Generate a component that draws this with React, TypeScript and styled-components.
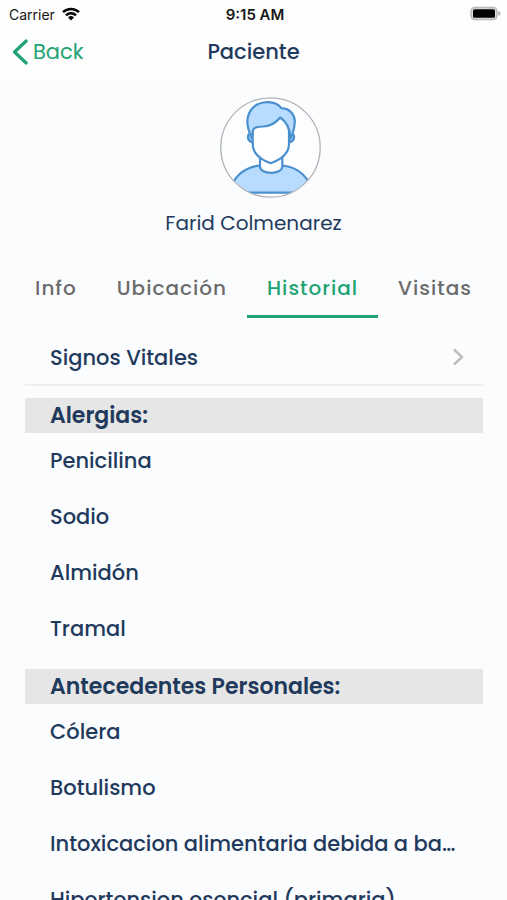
import React from "react";
import styled, { createGlobalStyle } from "styled-components";

const navy = "#1f3a5c";
const green = "#22a373";

const GlobalStyle = createGlobalStyle`
  *, *::before, *::after { box-sizing: border-box; }
  body {
    margin: 0;
    background: #fafcfe;
    color: ${navy};
    font-family: Poppins, Inter, sans-serif;
  }
  button { font: inherit; border: 0; background: none; padding: 0; cursor: pointer; }
`;

const Screen = styled.div`
  display: flex;
  flex-direction: column;
  height: 100vh;
`;

const TopArea = styled.div`
  flex: none;
  background: #fefefe;
`;

const StatusBar = styled.div`
  display: grid;
  grid-template-columns: 1fr auto 1fr;
  align-items: center;
  height: 28px;
  padding: 0 6px 0 9px;
  color: #161616;
  font-family: Inter, sans-serif;
  font-size: 14px;
`;

const Carrier = styled.span`
  display: flex;
  align-items: center;
  gap: 7px;
`;

const Clock = styled.time`
  font-size: 15px;
  font-weight: 600;
`;

const BatterySlot = styled.span`
  display: flex;
  justify-content: flex-end;
`;

const NavBar = styled.header`
  display: grid;
  grid-template-columns: 1fr auto 1fr;
  align-items: center;
  height: 52px;
  padding: 0 12px 4px;
`;

const BackButton = styled.button`
  display: flex;
  align-items: center;
  justify-self: start;
  gap: 5px;
  color: ${green};
  font-size: 21px;
  line-height: 28px;
`;

const NavTitle = styled.h1`
  margin: 0;
  font-size: 21px;
  font-weight: 500;
  line-height: 28px;
`;

const Content = styled.main`
  flex: 1;
  min-height: 0;
  overflow-y: auto;
  scrollbar-width: none;
`;

const Profile = styled.section`
  display: flex;
  flex-direction: column;
  align-items: center;
  padding-top: 17px;
`;

const AvatarSlot = styled.div`
  padding-left: 34px;
  line-height: 0;
`;

const PatientName = styled.p`
  margin: 11px 0 0;
  font-size: 20px;
  font-weight: 400;
  line-height: 28px;
`;

const Tabs = styled.nav`
  display: flex;
  justify-content: center;
  margin-top: 23px;
`;

const Tab = styled.button<{ $active?: boolean }>`
  height: 58px;
  padding: 0 20px;
  border-bottom: 3px solid ${(p) => (p.$active ? green : "transparent")};
  color: ${(p) => (p.$active ? green : "#6b6b6b")};
  font-size: 20px;
  font-weight: 500;
  letter-spacing: 1px;
`;

const History = styled.div`
  padding: 12px 24px 0 25px;
`;

const VitalsLink = styled.button`
  display: flex;
  align-items: center;
  justify-content: space-between;
  width: 100%;
  height: 56px;
  padding: 0 19px 0 25px;
  border-bottom: 2px solid #edeff1;
  color: ${navy};
  font-size: 21px;
  font-weight: 500;
`;

const Group = styled.section`
  margin-top: 12px;
`;

const GroupTitle = styled.h2`
  margin: 0;
  padding: 0 25px;
  background: #e6e6e6;
  font-size: 22px;
  font-weight: 600;
  line-height: 35px;
`;

const Items = styled.ul`
  margin: 0;
  padding: 0;
  list-style: none;
`;

const Item = styled.li`
  padding: 0 25px;
  font-size: 21px;
  font-weight: 500;
  line-height: 56px;
  white-space: nowrap;
`;

const WifiIcon = () => (
  <svg width="18" height="14" viewBox="0 0 18 14" fill="none" stroke="#050505" strokeWidth="2.5" aria-hidden="true">
    <path d="M1 5.1a11.6 11.6 0 0 1 16 0" />
    <path d="M4 8.3a7.2 7.2 0 0 1 10 0" />
    <path d="M9 13.4 6 10.5a4.3 4.3 0 0 1 6 0Z" fill="#050505" stroke="none" />
  </svg>
);

const BatteryIcon = () => (
  <svg width="31" height="16" viewBox="0 0 31 16" aria-hidden="true">
    <rect x="1" y="1.5" width="26" height="12" rx="4" fill="#ddd" stroke="#b9b9b9" strokeWidth="1.6" />
    <rect x="3" y="3.2" width="22" height="8.6" rx="1.5" fill="#000" />
    <path d="M28.5 5c2.6.9 2.6 4.1 0 5Z" fill="#a8a8a8" />
  </svg>
);

const BackIcon = () => (
  <svg width="16" height="26" viewBox="0 0 16 26" fill="none" stroke={green} strokeWidth="3.2" aria-hidden="true">
    <path d="M14.2 2 2.5 13l11.7 11" strokeLinejoin="round" strokeLinecap="round" />
  </svg>
);

const ChevronIcon = () => (
  <svg width="12" height="18" viewBox="0 0 12 18" fill="none" stroke="#bcbdbe" strokeWidth="2.4" aria-hidden="true">
    <path d="m2 1.5 8 7.5-8 7.5" />
  </svg>
);

const Avatar = () => (
  <svg width="101" height="101" viewBox="0 0 101 101" role="img" aria-label="Farid Colmenarez">
    <defs>
      <clipPath id="avatar-circle">
        <circle cx="50.5" cy="50.5" r="49.5" />
      </clipPath>
    </defs>
    <circle cx="50.5" cy="50.5" r="49.7" fill="#fcfdff" />
    <g clipPath="url(#avatar-circle)" stroke="#4a8fce" strokeWidth="2.2" strokeLinejoin="round">
      <path d="M11 95.7C11 82 23 70 40 68.5h22.3C79 70 91 82 91 95.7Z" fill="#b8dcff" />
      <path d="M40 60v9.500c0 8.500 22.300 8.500 22.300 0V60Z" fill="#fff" />
      <path d="M31.5 36.5c-5-.5-5 8 1.5 9M70.500 36.500c5-.5 5 8-1.500 9" fill="#8fc4f3" />
      <path d="M32.7 30v17c0 10 8 15.500 18 19.300C61 62.500 69 57 69 47V28L60.200 18 36 26Z" fill="#fff" />
      <path d="M31.700 40.500C27 31 26.500 22 29 16.500 33 8 41 5 48 5.200c6 .2 10.500 2 13.300 6C70 11.500 75.500 18 74.700 26c-.4 6-2 11-4.200 15C70 32 67 25 60.200 20.500 55 27 49 29.300 43 29.500c-5 0-8.500.5-10 3.500-.5 3-.3 5-1.300 7.500Z" fill="#b8dcff" />
    </g>
    <circle cx="50.5" cy="50.5" r="49.7" fill="none" stroke="#b2b4b6" strokeWidth="1.3" />
  </svg>
);

const tabs = ["Info", "Ubicación", "Historial", "Visitas"];

const groups = [
  { title: "Alergias:", items: ["Penicilina", "Sodio", "Almidón", "Tramal"] },
  {
    title: "Antecedentes Personales:",
    items: ["Cólera", "Botulismo", "Intoxicacion alimentaria debida a ba…", "Hipertension esencial (primaria)"],
  },
];

export default function App() {
  return (
    <>
      <GlobalStyle />
      <Screen>
        <TopArea>
          <StatusBar>
            <Carrier>Carrier <WifiIcon /></Carrier>
            <Clock>9:15 AM</Clock>
            <BatterySlot><BatteryIcon /></BatterySlot>
          </StatusBar>
          <NavBar>
            <BackButton type="button"><BackIcon />Back</BackButton>
            <NavTitle>Paciente</NavTitle>
          </NavBar>
        </TopArea>
        <Content>
          <Profile>
            <AvatarSlot><Avatar /></AvatarSlot>
            <PatientName>Farid Colmenarez</PatientName>
          </Profile>
          <Tabs>
            {tabs.map((tab) => (
              <Tab key={tab} type="button" $active={tab === "Historial"}>{tab}</Tab>
            ))}
          </Tabs>
          <History>
            <VitalsLink type="button">Signos Vitales<ChevronIcon /></VitalsLink>
            {groups.map((group) => (
              <Group key={group.title}>
                <GroupTitle>{group.title}</GroupTitle>
                <Items>
                  {group.items.map((item) => <Item key={item}>{item}</Item>)}
                </Items>
              </Group>
            ))}
          </History>
        </Content>
      </Screen>
    </>
  );
}
